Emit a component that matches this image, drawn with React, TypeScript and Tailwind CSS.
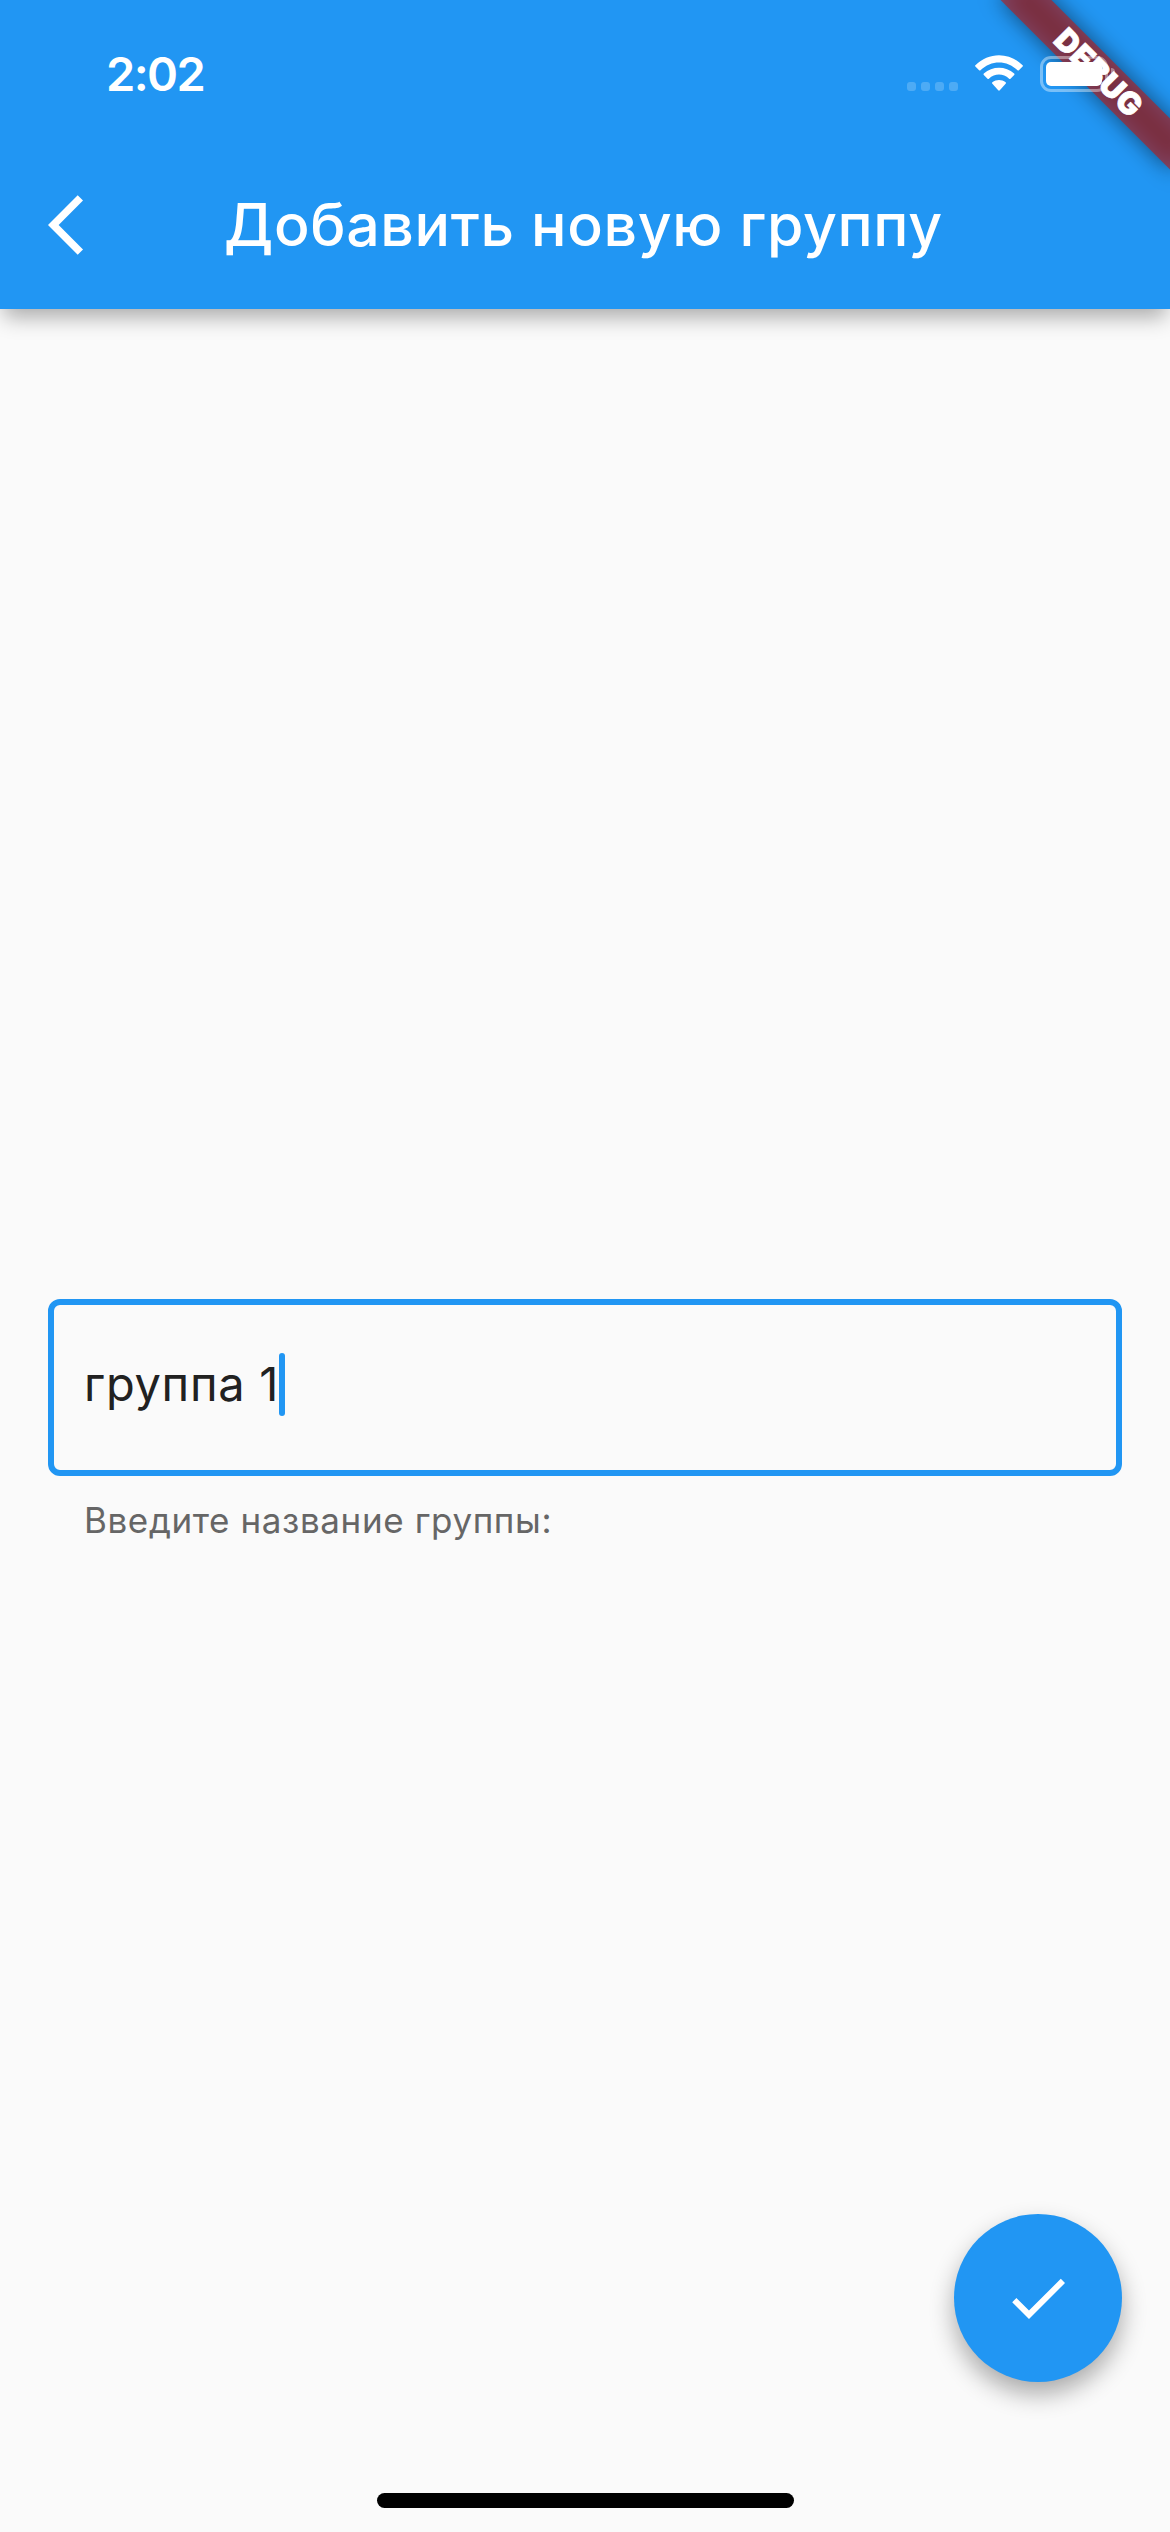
const font = "font-['Inter','Liberation_Sans',sans-serif]";

function DebugBanner() {
  return (
    <div className="pointer-events-none absolute top-0 right-0 h-[260px] w-[290px] overflow-hidden">
      <div className="absolute top-[54px] left-[98px] h-9 w-60 rotate-45 bg-black/50 blur-[11px]" />
      <div className="absolute top-[54px] left-[98px] flex h-9 w-60 rotate-45 items-center justify-center bg-[#b71c1c]/63">
        <span className="pl-0.5 text-[31px] leading-9 font-black tracking-[0.4px] text-white [-webkit-text-stroke:0.8px_white]">
          DEBUG
        </span>
      </div>
    </div>
  );
}

function SignalDots() {
  return (
    <div className="flex gap-[5px]">
      {[0, 1, 2, 3].map((n) => (
        <div key={n} className="size-[9px] rounded-[3px] bg-white/20" />
      ))}
    </div>
  );
}

function WifiIcon() {
  return (
    <svg className="h-9 w-12" viewBox="0 0 48 36" fill="#fff">
      <path d="M0.4 10.2C13.5-3.2 34.5-3.2 47.6 10.2Q48.3 10.9 47.6 11.6L43.9 15.2Q43.2 15.9 42.5 15.2C32 4.8 16 4.8 5.5 15.2Q4.8 15.9 4.1 15.2L0.4 11.6Q-0.3 10.9 0.4 10.2Z" />
      <path d="M8.8 18.6C17.4 10.8 30.6 10.8 39.2 18.6Q39.9 19.3 39.2 20L35.5 23.7Q34.8 24.4 34.1 23.7C28.2 18.2 19.8 18.2 13.9 23.7Q13.2 24.4 12.5 23.7L8.8 20Q8.1 19.3 8.8 18.6Z" />
      <path d="M17.4 27.2C21.2 24.4 26.8 24.4 30.6 27.2Q31.3 27.9 30.6 28.7L24.8 35.3Q24 36.1 23.2 35.3L17.4 28.7Q16.7 27.9 17.4 27.2Z" />
    </svg>
  );
}

function BatteryIcon() {
  return (
    <div className="flex items-center gap-[3px]">
      <div className="h-9 w-[68px] rounded-[11px] border-[3px] border-white/40 p-[3px]">
        <div className="h-full w-full rounded-[5px] bg-white" />
      </div>
      <div className="h-3 w-1 rounded-r-full bg-white/40" />
    </div>
  );
}

function StatusBar() {
  return (
    <div className="flex h-[141px] items-start justify-between pr-[55px] pl-[106px]">
      <div className="mt-11 text-[47px] leading-[60px] font-semibold tracking-[-1.6px] text-white">2:02</div>
      <div className="relative z-20 mt-[55px] flex items-start">
        <div className="mt-[27px] mr-[17px]">
          <SignalDots />
        </div>
        <WifiIcon />
        <div className="mt-px ml-[17px]">
          <BatteryIcon />
        </div>
      </div>
    </div>
  );
}

function AppBar() {
  return (
    <div className="flex h-[168px] items-center pl-12">
      <button className="size-[72px]" aria-label="Назад">
        <svg className="size-[72px]" viewBox="0 0 24 24" fill="#fff">
          <path d="M11.67 3.87L9.9 2.1 0 12l9.9 9.9 1.77-1.77L3.54 12z" />
        </svg>
      </button>
      <h1 className="ml-[104px] text-[59px] leading-[72px] font-medium tracking-[0.65px] whitespace-nowrap text-white">
        Добавить новую группу
      </h1>
    </div>
  );
}

export default function App() {
  return (
    <div className={`relative flex h-[2532px] w-[1170px] flex-col overflow-hidden bg-[#fafafa] ${font}`}>
      <header className="relative z-10 shrink-0 bg-[#2196f3] shadow-[0_12px_20px_-4px_rgba(0,0,0,0.32)]">
        <DebugBanner />
        <StatusBar />
        <AppBar />
      </header>

      <main className="flex flex-1 flex-col px-12 pt-[990px]">
        <div className="flex h-[177px] w-full items-center rounded-[12px] border-[6px] border-[#2196f3] pb-1.5 pl-[30px]">
          <span className="pb-px text-[47px] leading-[60px] tracking-[0.7px] whitespace-nowrap text-[#212121]">
            группа 1
          </span>
          <span className="h-[63px] w-1.5 rounded-full bg-[#2196f3]" />
        </div>
        <p className="mt-5 pl-9 text-[35px] leading-[48px] tracking-[0.6px] text-[#666666]">Введите название группы:</p>
      </main>

      <div className="flex shrink-0 justify-end pr-12">
        <button
          aria-label="Готово"
          className="flex size-[168px] items-center justify-center rounded-full bg-[#2196f3] shadow-[0_12px_24px_rgba(0,0,0,0.32)]"
        >
          <svg className="size-[72px]" viewBox="0 0 24 24" fill="#fff">
            <path d="M9 16.2L4.8 12l-1.4 1.4L9 19 21 7l-1.4-1.4L9 16.2z" />
          </svg>
        </button>
      </div>

      <div className="flex h-[150px] shrink-0 items-end justify-center pb-6">
        <div className="h-[15px] w-[417px] rounded-full bg-black" />
      </div>
    </div>
  );
}
